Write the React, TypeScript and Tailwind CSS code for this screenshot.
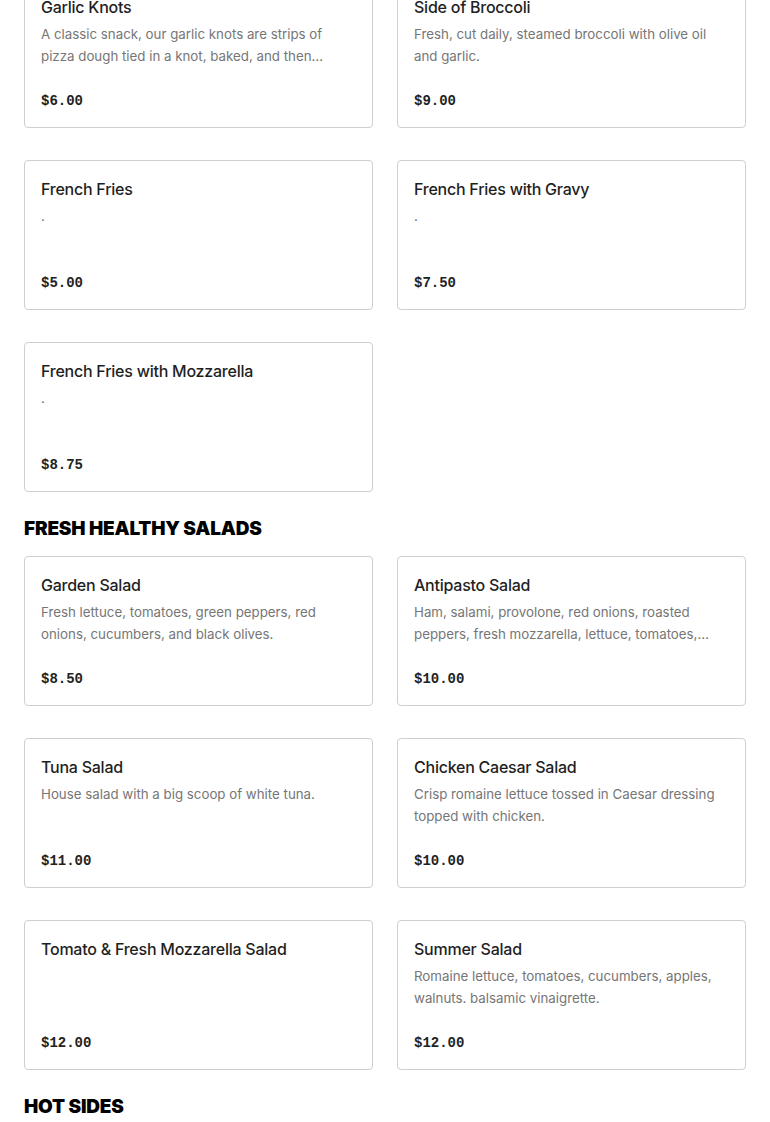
import React from "react";

type Item = { name: string; desc: string; price: string };

const appetizers: Item[] = [
  {
    name: "Garlic Knots",
    desc: "A classic snack, our garlic knots are strips of pizza dough tied in a knot, baked, and then tossed in garlic butter and parmesan.",
    price: "$6.00",
  },
  { name: "Side of Broccoli", desc: "Fresh, cut daily, steamed broccoli with olive oil and garlic.", price: "$9.00" },
  { name: "French Fries", desc: ".", price: "$5.00" },
  { name: "French Fries with Gravy", desc: ".", price: "$7.50" },
  { name: "French Fries with Mozzarella", desc: ".", price: "$8.75" },
];

const salads: Item[] = [
  { name: "Garden Salad", desc: "Fresh lettuce, tomatoes, green peppers, red onions, cucumbers, and black olives.", price: "$8.50" },
  {
    name: "Antipasto Salad",
    desc: "Ham, salami, provolone, red onions, roasted peppers, fresh mozzarella, lettuce, tomatoes, cucumbers and olives.",
    price: "$10.00",
  },
  { name: "Tuna Salad", desc: "House salad with a big scoop of white tuna.", price: "$11.00" },
  { name: "Chicken Caesar Salad", desc: "Crisp romaine lettuce tossed in Caesar dressing topped with chicken.", price: "$10.00" },
  { name: "Tomato & Fresh Mozzarella Salad", desc: "", price: "$12.00" },
  { name: "Summer Salad", desc: "Romaine lettuce, tomatoes, cucumbers, apples, walnuts. balsamic vinaigrette.", price: "$12.00" },
];

const Card: React.FC<{ item: Item }> = ({ item }) => (
  <div className="h-[150px] flex flex-col rounded border border-[#cfcfcf] bg-white p-4">
    <div className="text-[16px] leading-6 font-medium text-[#1f1f1f] tracking-[-0.015em]">{item.name}</div>
    <p className="mt-1 text-[13.3px] leading-[22px] text-[#767676] line-clamp-2">{item.desc}</p>
    <div className="mt-auto font-['Liberation_Mono',monospace] text-[14px] leading-5 font-bold text-[#222]">
      {item.price}
    </div>
  </div>
);

const Heading: React.FC<{ children: React.ReactNode }> = ({ children }) => (
  <h2 className="mt-[25px] mb-[15px] text-[19px] leading-6 font-black text-black uppercase tracking-[-0.01em]">
    {children}
  </h2>
);

export default function App() {
  return (
    <div className="min-h-screen bg-white font-['Inter','Noto_Sans',sans-serif] px-6 -mt-[22px]">
      <div className="grid grid-cols-2 gap-x-6 gap-y-8">
        {appetizers.map((it) => (
          <Card key={it.name} item={it} />
        ))}
      </div>
      <Heading>Fresh Healthy Salads</Heading>
      <div className="grid grid-cols-2 gap-x-6 gap-y-8">
        {salads.map((it) => (
          <Card key={it.name} item={it} />
        ))}
      </div>
      <Heading>Hot Sides</Heading>
    </div>
  );
}
